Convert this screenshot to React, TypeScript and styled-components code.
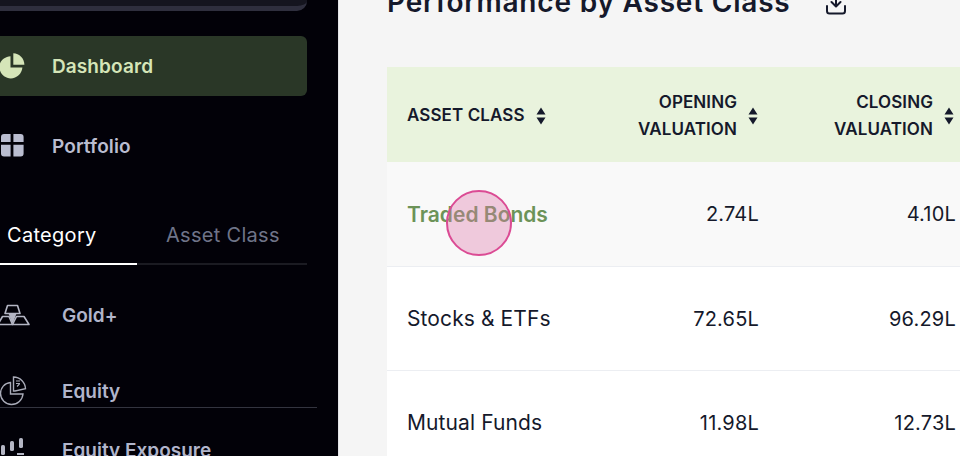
import styled, { createGlobalStyle } from "styled-components";

const GlobalStyle = createGlobalStyle`
  html, body {
    margin: 0;
    padding: 0;
    height: 456px;
    overflow: hidden;
  }
  body {
    font-family: "Inter", "Liberation Sans", sans-serif;
  }
`;

const rows = [
  { name: "Traded Bonds", opening: "2.74L", closing: "4.10L", active: true },
  { name: "Stocks & ETFs", opening: "72.65L", closing: "96.29L" },
  { name: "Mutual Funds", opening: "11.98L", closing: "12.73L" },
];

function SortIcon() {
  return (
    <SortSvg viewBox="0 0 10 18">
      <path d="M5 0.5 L9.5 7.5 H0.5 Z M0.5 10.5 H9.5 L5 17.5 Z" fill="#15192b" />
    </SortSvg>
  );
}

function PieIcon() {
  return (
    <svg width="26" height="26" viewBox="0 0 26 26">
      <path d="M10.5 3.2 V14.6 H22.4 C21.9 20.8 16.8 25.5 10.8 25.5 C4.6 25.5 -0.6 20.2 -0.6 14 C-0.6 8.2 4.2 3.6 10.5 3.2 Z" fill="#d5e5b8" />
      <path d="M13.3 0.2 C19.4 0.4 24.2 5.3 24.4 11.8 H13.3 Z" fill="#d5e5b8" />
    </svg>
  );
}

function GridIcon() {
  return (
    <svg width="26" height="26" viewBox="0 0 26 26">
      <path d="M1 9 V4 C1 2 2 1 4 1 H10.6 V9 Z M13.4 9 V1 H20.6 C22.6 1 23.6 2 23.6 4 V9 Z M1 11.8 H10.6 V23.6 H4 C2 23.6 1 22.6 1 20.6 Z M13.4 11.8 H23.6 V20.6 C23.6 22.6 22.6 23.6 20.6 23.6 H13.4 Z" fill="#babdd0" />
    </svg>
  );
}

function GoldIcon() {
  return (
    <svg width="30" height="22" viewBox="0 0 30 22" fill="none" stroke="#b4b6c4" strokeWidth="1.6" strokeLinejoin="round">
      <path d="M5 9.5 L7.5 1.5 H17.5 L20 9.5 Z" />
      <path d="M-2 20.5 L2.5 12.5 H9 L12.5 20.5 Z" />
      <path d="M16.5 12.5 H24 L29 20.5 H12.5 Z" />
      <path d="M9.5 10 H15.5 L12.5 18 Z" fill="#b4b6c4" />
    </svg>
  );
}

function EquityIcon() {
  return (
    <svg width="28" height="30" viewBox="0 0 28 30" fill="none" stroke="#a9abb8" strokeWidth="1.4">
      <path d="M10.5 6.5 C4.5 7 0.5 12 0.5 17.5 C0.5 23.5 5.5 28.5 11.5 28.5 C17.5 28.5 22.5 24 23 18 H10.5 Z" />
      <path d="M13.5 1 C20 1 25.3 6.2 25.5 12.8 L15 15 H13.5 Z" />
      <path d="M16 5 H20 M16 7.5 H20 M17 10.5 L19.5 8" strokeWidth="1.1" />
    </svg>
  );
}

function CandleIcon() {
  return (
    <svg width="26" height="24" viewBox="0 0 26 24" fill="#b4b6c4">
      <rect x="1" y="7" width="4" height="10" rx="1.6" />
      <rect x="10" y="3" width="4" height="10" rx="1.6" />
      <rect x="19" y="0" width="4" height="10" rx="1.6" />
      <rect x="17" y="15" width="7" height="2" />
    </svg>
  );
}

function DownloadIcon() {
  return (
    <DownloadSvg viewBox="0 0 24 24" fill="none" stroke="#15192b" strokeWidth="2" strokeLinecap="round" strokeLinejoin="round">
      <path d="M12 3 V14 M7.5 10 L12 14.5 L16.5 10" />
      <path d="M3 14 V19 C3 20.5 4 21.5 5.5 21.5 H18.5 C20 21.5 21 20.5 21 19 V14" />
    </DownloadSvg>
  );
}

export default function App() {
  return (
    <>
      <GlobalStyle />
      <Page>
        <Sidebar>
          <TopCard />
          <Nav>
            <NavItem $active>
              <NavIcon><PieIcon /></NavIcon>
              Dashboard
            </NavItem>
            <NavItem>
              <NavIcon><GridIcon /></NavIcon>
              Portfolio
            </NavItem>
          </Nav>
          <Tabs>
            <Tab $active>Category</Tab>
            <Tab>Asset Class</Tab>
          </Tabs>
          <SubList>
            <SubItem>
              <SubIcon><GoldIcon /></SubIcon>
              Gold+
            </SubItem>
            <SubItem>
              <SubIcon><EquityIcon /></SubIcon>
              Equity
            </SubItem>
            <SubItem>
              <SubIcon><CandleIcon /></SubIcon>
              Equity Exposure
            </SubItem>
          </SubList>
          <FooterLine />
        </Sidebar>
        <Main>
          <TitleRow>
            <Title>Performance by Asset Class</Title>
            <DownloadIcon />
          </TitleRow>
          <Table>
            <HeadRow>
              <HeadCell>
                <HeadLabel>ASSET CLASS</HeadLabel>
                <SortIcon />
              </HeadCell>
              <HeadCell $right>
                <HeadLabel>OPENING<br />VALUATION</HeadLabel>
                <SortIcon />
              </HeadCell>
              <HeadCell $right>
                <HeadLabel>CLOSING<br />VALUATION</HeadLabel>
                <SortIcon />
              </HeadCell>
            </HeadRow>
            {rows.map((row) => (
              <Row key={row.name} $active={row.active}>
                <NameCell $active={row.active}>{row.name}</NameCell>
                <ValueCell>{row.opening}</ValueCell>
                <ValueCell>{row.closing}</ValueCell>
              </Row>
            ))}
            <TouchDot />
          </Table>
        </Main>
      </Page>
    </>
  );
}

const Page = styled.div`
  display: flex;
  width: 960px;
  height: 456px;
  overflow: hidden;
  background: #f5f5f5;
`;

const Sidebar = styled.aside`
  position: relative;
  flex: 0 0 339px;
  height: 456px;
  box-sizing: border-box;
  padding-right: 31px;
  overflow: hidden;
  background: #020108;
  border-right: 1px solid #e4e4e8;
`;

const TopCard = styled.div`
  height: 6px;
  background: #15151f;
  border-bottom: 5px solid #2f2f3e;
  border-bottom-right-radius: 10px;
`;

const Nav = styled.nav`
  display: flex;
  flex-direction: column;
  gap: 20px;
  margin-top: 25px;
`;

const NavItem = styled.div<{ $active?: boolean }>`
  display: flex;
  align-items: center;
  height: 60px;
  border-radius: 0 6px 6px 0;
  font-size: 19px;
  letter-spacing: 0.1px;
  font-weight: 600;
  color: ${(p) => (p.$active ? "#d5e5b8" : "#babdd0")};
  background: ${(p) => (p.$active ? "#2a3727" : "transparent")};
`;

const NavIcon = styled.span`
  display: flex;
  flex: 0 0 52px;
`;

const Tabs = styled.div`
  display: grid;
  grid-template-columns: 137px 1fr;
  margin-top: 29px;
  border-bottom: 2px solid #1b1b22;
`;

const Tab = styled.div<{ $active?: boolean }>`
  height: 60px;
  margin-bottom: -2px;
  box-sizing: border-box;
  padding: 18px 0 0 ${(p) => (p.$active ? "7px" : "29px")};
  font-size: 20px;
  letter-spacing: 0.3px;
  line-height: 24px;
  font-weight: 400;
  color: ${(p) => (p.$active ? "#ffffff" : "#6f7488")};
  border-bottom: 2px solid ${(p) => (p.$active ? "#ffffff" : "transparent")};
`;

const SubList = styled.div`
  display: flex;
  flex-direction: column;
`;

const SubItem = styled.div`
  display: flex;
  align-items: center;
  height: 76px;
  flex-shrink: 0;
  font-size: 19px;
  font-weight: 600;
  color: #b1b5cb;
  &:first-child {
    margin-top: 12px;
  }
  &:last-child {
    height: 42px;
  }
`;

const SubIcon = styled.span`
  display: flex;
  flex: 0 0 62px;
`;

const FooterLine = styled.div`
  position: absolute;
  left: 0;
  top: 407px;
  width: 317px;
  height: 1px;
  background: #33343f;
`;

const Main = styled.main`
  flex: 1;
  min-width: 0;
  padding-left: 48px;
  overflow: hidden;
`;

const TitleRow = styled.div`
  display: flex;
  align-items: center;
  gap: 33px;
  height: 67px;
  margin-top: -32px;
`;

const Title = styled.h1`
  margin: 0;
  font-size: 28px;
  letter-spacing: 0.8px;
  line-height: 34px;
  font-weight: 600;
  color: #15192b;
  white-space: nowrap;
`;

const DownloadSvg = styled.svg`
  flex-shrink: 0;
  width: 24px;
  height: 24px;
  margin-top: 5px;
`;

const Table = styled.div`
  position: relative;
  width: 600px;
  margin-top: 32px;
`;

const HeadRow = styled.div`
  display: grid;
  grid-template-columns: 180px 212px 196px;
  height: 95px;
  background: #e9f3dd;
`;

const HeadCell = styled.div<{ $right?: boolean }>`
  display: flex;
  align-items: center;
  justify-content: ${(p) => (p.$right ? "flex-end" : "flex-start")};
  gap: 11px;
  padding: ${(p) => (p.$right ? "2px 21px 0 0" : "2px 0 0 20px")};
`;

const HeadLabel = styled.div`
  font-size: 17px;
  letter-spacing: 0.1px;
  line-height: 27px;
  font-weight: 600;
  text-align: right;
  color: #15192b;
  white-space: nowrap;
`;

const SortSvg = styled.svg`
  flex: 0 0 10px;
  width: 10px;
  height: 18px;
`;

const Row = styled.div<{ $active?: boolean }>`
  display: grid;
  grid-template-columns: 180px 212px 196px;
  align-items: center;
  height: ${(p) => (p.$active ? "105px" : "104px")};
  box-sizing: border-box;
  background: ${(p) => (p.$active ? "#f9f9f9" : "#ffffff")};
  border-bottom: 1px solid #eceef2;
`;

const NameCell = styled.div<{ $active?: boolean }>`
  padding-left: 20px;
  font-size: 21px;
  letter-spacing: ${(p) => (p.$active ? "0" : "0.1px")};
  font-weight: ${(p) => (p.$active ? 600 : 400)};
  color: ${(p) => (p.$active ? "#6c9358" : "#15192b")};
  white-space: nowrap;
`;

const ValueCell = styled.div`
  padding-right: 20px;
  font-size: 20px;
  letter-spacing: 0.2px;
  text-align: right;
  color: #15192b;
  &:last-child {
    padding-right: 19px;
  }
`;

const TouchDot = styled.div`
  position: absolute;
  left: 59px;
  top: 123px;
  width: 66px;
  height: 66px;
  box-sizing: border-box;
  border-radius: 50%;
  background: rgba(222, 120, 170, 0.37);
  border: 2px solid #db4b94;
`;
